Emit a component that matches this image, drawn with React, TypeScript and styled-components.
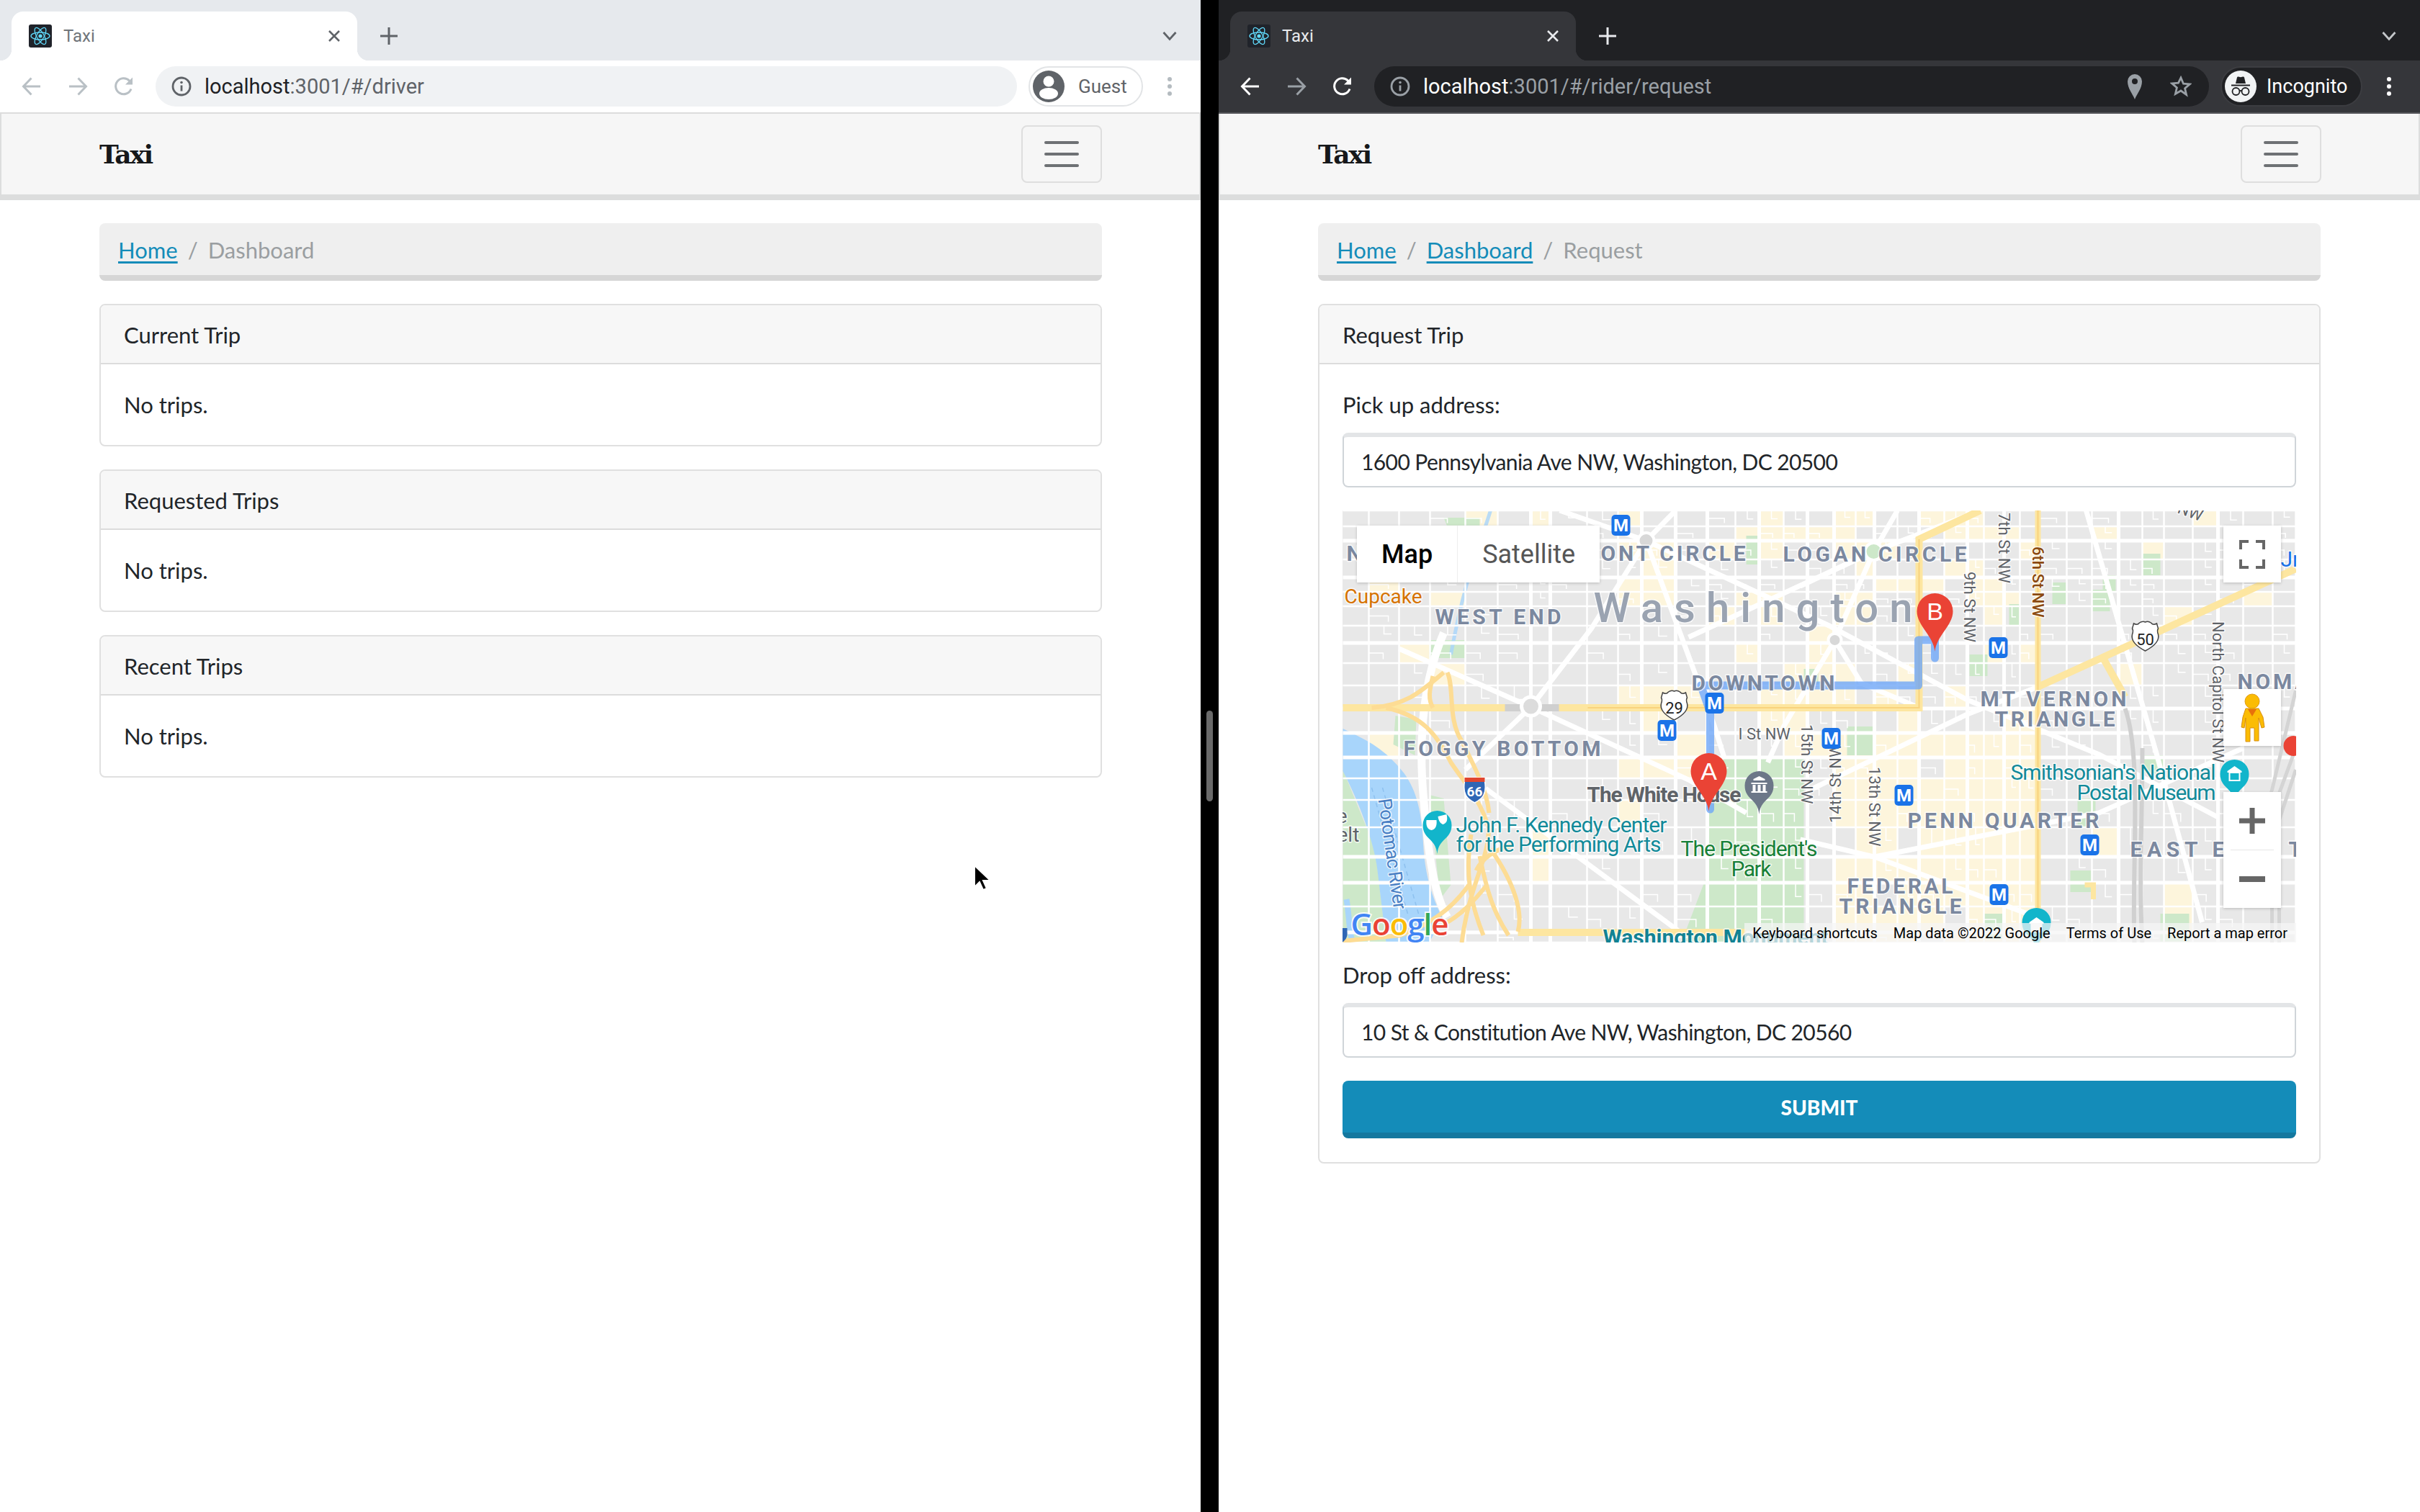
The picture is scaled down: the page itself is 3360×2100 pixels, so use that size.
import React from "react";
import styled, { createGlobalStyle } from "styled-components";

const GlobalStyle = createGlobalStyle`
  html, body { margin: 0; padding: 0; width: 3360px; height: 2100px; overflow: hidden; background: #000; }
  * { box-sizing: border-box; }
`;

const UI = `"Lato", "Noto Sans", sans-serif`;
const CHROME = `"Roboto", "Liberation Sans", sans-serif`;

const Screen = styled.div`position: relative; display: flex; width: 3360px; height: 2100px;`;
const Win = styled.div<{ $w: number }>`width: ${p => p.$w}px; height: 2100px; background: #fff; display: flex; flex-direction: column; overflow: hidden;`;
const Divider = styled.div`width: 25px; background: #000; display: flex; align-items: center; justify-content: center;`;
const Thumb = styled.div`width: 9px; height: 126px; border-radius: 5px; background: #6a6a6a;`;
const TabStrip = styled.div<{ $dark?: boolean }>`height: 84px; padding: 16px 0 0 16px; display: flex; background: ${p => p.$dark ? "#202124" : "#e6e9ed"}; flex: none;`;
const Tab = styled.div<{ $dark?: boolean }>`
  position: relative; width: 480px; height: 68px; padding: 0 22px 0 24px; display: flex; align-items: center;
  border-radius: 16px 16px 0 0; background: ${p => p.$dark ? "#35363a" : "#fff"};
  &::before, &::after { content: ""; position: absolute; bottom: 0; width: 16px; height: 16px; }
  &::before { left: -16px; background: radial-gradient(circle at 0 0, transparent 16px, ${p => p.$dark ? "#35363a" : "#fff"} 16.5px); }
  &::after { right: -16px; background: radial-gradient(circle at 100% 0, transparent 16px, ${p => p.$dark ? "#35363a" : "#fff"} 16.5px); }
`;
const TabTitle = styled.span<{ $dark?: boolean }>`margin-left: 16px; flex: 1; font: 24px ${CHROME}; color: ${p => p.$dark ? "#e8eaed" : "#70757a"};`;
const StripIcon = styled.div<{ $end?: boolean }>`width: 48px; height: 68px; display: flex; align-items: center; justify-content: center; margin-left: ${p => p.$end ? "auto" : "20px"}; margin-right: ${p => p.$end ? "19px" : "0"};`;
const Toolbar = styled.div<{ $dark?: boolean }>`height: 74px; flex: none; padding: 8px 19px 8px 12px; display: flex; align-items: center; background: ${p => p.$dark ? "#35363a" : "#fff"}; border-bottom: 2px solid ${p => p.$dark ? "#55565a" : "#dcdcdc"};`;
const NavBtn = styled.div`width: 64px; height: 56px; display: flex; align-items: center; justify-content: center;`;
const Omnibox = styled.div<{ $dark?: boolean }>`flex: 1; height: 56px; margin-left: 12px; padding: 0 24px 0 22px; border-radius: 28px; display: flex; align-items: center; background: ${p => p.$dark ? "#202124" : "#f0f2f4"};`;
const Url = styled.div<{ $dark?: boolean }>`margin-left: 18px; flex: 1; font: 29px ${CHROME}; color: ${p => p.$dark ? "#9aa0a6" : "#5f6368"}; b { font-weight: 400; color: ${p => p.$dark ? "#fff" : "#202124"}; }`;
const OmniIcon = styled.div<{ $gap: number }>`margin-right: ${p => p.$gap}px; display: flex;`;
const Pill = styled.div<{ $dark?: boolean; $w: number }>`
  width: ${p => p.$w}px; height: 56px; margin-left: 16px; padding: 0 4px; display: flex; align-items: center; border-radius: 28px;
  background: ${p => p.$dark ? "#202124" : "#fff"}; border: 2px solid ${p => p.$dark ? "#3c3d41" : "#e2e4e6"};
`;
const PillText = styled.span<{ $dark?: boolean }>`margin-left: ${p => p.$dark ? 14 : 19}px; font: ${p => p.$dark ? "27px" : "26px"} ${CHROME}; color: ${p => p.$dark ? "#fff" : "#5f6368"};`;
const Dots = styled.div<{ $dark?: boolean }>`
  width: 48px; margin-left: 13px; display: flex; flex-direction: column; align-items: center; gap: 4px;
  i { width: 6px; height: 6px; border-radius: 50%; background: ${p => p.$dark ? "#fff" : "#b4bbc0"}; }
`;
const Navbar = styled.div`height: 120px; flex: none; padding: 0 136px; display: flex; align-items: center; justify-content: space-between; background: #f6f6f6; border: solid #dcdddd; border-width: 0 2px 8px;`;
const Brand = styled.div`font: bold 36px "DejaVu Serif", serif; letter-spacing: -2.2px; color: #16181a;`;
const Toggler = styled.div`width: 112px; height: 80px; margin-right: -1px; border: 2px solid #dedede; border-radius: 8px; display: flex; flex-direction: column; align-items: center; justify-content: center; gap: 12px; i { width: 48px; height: 4px; border-radius: 2px; background: #6e7174; }`;
const Container = styled.div`width: 1392px; margin: 32px 0 0 138px; display: flex; flex-direction: column; gap: 32px; font: 31px/46px ${UI}; color: #212529;`;
const Breadcrumb = styled.div`height: 80px; padding: 14px 26px 0; display: flex; gap: 14px; background: #efefef; border-bottom: 8px solid #d6d6d6; border-radius: 8px;`;
const Crumb = styled.a`color: #148cb9; text-decoration: underline; text-underline-offset: 4px;`;
const Current = styled.span`color: #9a9ea1;`;
const Sep = styled.span`color: #9a9ea1;`;
const Card = styled.section`border: 2px solid #e0e0e0; border-radius: 8px; background: #fff; overflow: hidden;`;
const CardHead = styled.div`height: 84px; padding: 20px 32px 0; background: #f7f7f7; border-bottom: 2px solid #dcdcdc; margin-top: -2px;`;
const CardBody = styled.div`padding: 33px 32px 33px; display: flex; flex-direction: column;`;
const Line = styled.div`height: 46px; line-height: 46px;`;
const Field = styled.div`height: 76px; margin-top: 16px; padding: 0 24px; display: flex; align-items: center; border: 2px solid #d0d5d9; border-top-width: 6px; border-top-color: #e3e5e7; border-radius: 8px; background: #fff; font: 30px ${UI}; letter-spacing: -0.6px; color: #212529;`;
const MapBox = styled.div`position: relative; height: 600px; margin: 32px 0 22px; overflow: hidden; background: #e8e8e8;`;
const MapSvg = styled.svg`display: block; width: 100%; height: 100%;`;
const MapType = styled.div`position: absolute; left: 20px; top: 21px; height: 79px; display: flex; background: #fff; box-shadow: 0 1px 4px rgba(0,0,0,.2);`;
const MapTypeBtn = styled.div<{ $on?: boolean }>`padding: 0 34px; display: flex; align-items: center; font: ${p => p.$on ? 500 : 400} 36px ${CHROME}; color: ${p => p.$on ? "#000" : "#565656"}; & + & { border-left: 1px solid #eee; }`;
const MapButton = styled.div<{ $top: number }>`position: absolute; right: 21px; top: ${p => p.$top}px; width: 80px; height: 79px; display: flex; align-items: center; justify-content: center; background: #fff; box-shadow: 0 1px 4px rgba(0,0,0,.2);`;
const ZoomBox = styled.div`position: absolute; right: 21px; top: 391px; width: 80px; height: 161px; display: flex; flex-direction: column; align-items: center; background: #fff; box-shadow: 0 1px 4px rgba(0,0,0,.2);`;
const ZoomBtn = styled.div`flex: 1; display: flex; align-items: center; justify-content: center; width: 100%;`;
const ZoomLine = styled.div`width: 60px; height: 1px; flex: none; background: #e6e6e6;`;
const Attribution = styled.div`position: absolute; right: 0; bottom: 0; height: 27px; display: flex; align-items: center; font: 20px ${CHROME}; color: #000; background: rgba(245,245,245,.72); padding-right: 7px; span { padding: 0 11px; white-space: nowrap; } span:last-child { padding-right: 5px; }`;
const Submit = styled.div`height: 80px; margin-top: 32px; padding-top: 2px; display: flex; align-items: center; justify-content: center; border-radius: 8px; background: #148cb9; border-bottom: 8px solid #14789f; font: 900 28px ${UI}; color: #fff;`;
const Pointer = styled.svg`position: absolute; left: 1350px; top: 1200px;`;

const Lbl = styled.text<{ $k: string }>`
  dominant-baseline: central; paint-order: stroke; stroke: rgba(255,255,255,.75); stroke-width: 3px; stroke-linejoin: round;
  font-family: ${CHROME};
  ${p => ({
    area: "font-size:30px;font-weight:700;fill:#7b889f;",
    city: "font-size:58px;font-weight:500;fill:#9aa3b1;",
    poi: "font-size:30px;fill:#128a99;",
    bold: "font-size:30px;font-weight:700;fill:#5f6368;",
    park: "font-size:30px;fill:#188038;",
    road: "font-size:22px;fill:#5f6368;",
    road6: "font-size:22px;font-weight:500;fill:#8b4a10;",
    river: "font-size:26px;fill:#4a80c4;",
    orange: "font-size:28px;fill:#d67300;",
    mono: "font-size:28px;fill:#5f6368;",
    mc: "font-size:30px;font-weight:700;fill:#128293;",
    blue: "font-size:30px;fill:#1a73e8;",
  } as Record<string, string>)[p.$k]}
`;
const LogoText = styled.text`font: 600 42px "Open Sans", ${CHROME}; paint-order: stroke; stroke: rgba(255,255,255,.85); stroke-width: 4px; letter-spacing: -1px;`;
const ShieldNum = styled.text`font: 22px ${CHROME}; fill: #222; text-anchor: middle; dominant-baseline: central;`;
const PinLetter = styled.text`font: 34px "Liberation Sans", sans-serif; fill: #fff; text-anchor: middle; dominant-baseline: central;`;
const MetroLetter = styled.text`font: bold 24px ${CHROME}; fill: #fff; text-anchor: middle; dominant-baseline: central;`;

/* ---------- chrome icons ---------- */
const Favicon = () => (
  <svg width="32" height="32" viewBox="0 0 32 32">
    <rect width="32" height="32" rx="3" fill="#20232a" />
    <g fill="none" stroke="#61dafb" strokeWidth="1.3">
      <ellipse cx="16" cy="16" rx="13" ry="5" />
      <ellipse cx="16" cy="16" rx="13" ry="5" transform="rotate(60 16 16)" />
      <ellipse cx="16" cy="16" rx="13" ry="5" transform="rotate(120 16 16)" />
    </g>
    <circle cx="16" cy="16" r="2.6" fill="#61dafb" />
  </svg>
);
const Close = ({ c }: { c: string }) => (
  <svg width="20" height="20" viewBox="0 0 20 20"><path d="M3 3l14 14M17 3L3 17" stroke={c} strokeWidth="2.6" /></svg>
);
const Plus = ({ c }: { c: string }) => (
  <svg width="26" height="26" viewBox="0 0 26 26"><path d="M13 1v24M1 13h24" stroke={c} strokeWidth="3" /></svg>
);
const Chevron = ({ c }: { c: string }) => (
  <svg width="20" height="14" viewBox="0 0 20 14"><path d="M1.5 2L10 11.5 18.5 2" fill="none" stroke={c} strokeWidth="2.8" /></svg>
);
const Back = ({ c }: { c: string }) => (
  <svg width="28" height="28" viewBox="0 0 28 28"><path d="M26 14H3M13.5 2.5L2.5 14l11 11.5" fill="none" stroke={c} strokeWidth="3" /></svg>
);
const Forward = ({ c }: { c: string }) => (
  <svg width="28" height="28" viewBox="0 0 28 28"><path d="M2 14h23M14.5 2.5l11 11.5-11 11.5" fill="none" stroke={c} strokeWidth="3" /></svg>
);
const Reload = ({ c }: { c: string }) => (
  <svg width="28" height="28" viewBox="0 0 28 28"><path d="M24 17.5A11 11 0 1 1 21.5 6L25 10" fill="none" stroke={c} strokeWidth="3" /><path d="M26 1.5v10H16z" fill={c} /></svg>
);
const Info = ({ c }: { c: string }) => (
  <svg width="28" height="28" viewBox="0 0 28 28"><circle cx="14" cy="14" r="12" fill="none" stroke={c} strokeWidth="2.8" /><path d="M14 12.5v8" stroke={c} strokeWidth="2.8" /><circle cx="14" cy="8.5" r="1.8" fill={c} /></svg>
);
const GuestAvatar = () => (
  <svg width="44" height="44" viewBox="0 0 44 44"><circle cx="22" cy="22" r="22" fill="#5f6368" /><circle cx="22" cy="15" r="7.5" fill="#fff" /><ellipse cx="22" cy="32" rx="13" ry="8" fill="#fff" /></svg>
);
const IncognitoAvatar = () => (
  <svg width="44" height="44" viewBox="0 0 44 44">
    <circle cx="22" cy="22" r="22" fill="#f1f3f4" />
    <path d="M15 18l2-8.5c.3-1 1-1.3 2-1l3 .8 3-.8c1-.3 1.7 0 2 1l2 8.5z" fill="#202124" />
    <path d="M9 20.5h26" stroke="#202124" strokeWidth="2" />
    <circle cx="15.5" cy="29" r="5" fill="none" stroke="#202124" strokeWidth="1.8" />
    <circle cx="28.5" cy="29" r="5" fill="none" stroke="#202124" strokeWidth="1.8" />
    <path d="M20 28.5c1.5-1 2.5-1 4 0" fill="none" stroke="#202124" strokeWidth="1.8" />
  </svg>
);
const LocationPin = () => (
  <svg width="22" height="36" viewBox="0 0 22 36"><path d="M11 36C8 28 1 21 1 11a10 10 0 0 1 20 0c0 10-7 17-10 25z" fill="#9aa0a6" /><circle cx="11" cy="11" r="4" fill="#202124" /></svg>
);
const Star = () => (
  <svg width="30" height="30" viewBox="0 0 30 30"><path d="M15 3l3.5 8.2 8.8.7-6.7 5.8 2 8.7L15 21l-7.600 4.400 2-8.700-6.700-5.800 8.800-.7z" fill="none" stroke="#9aa0a6" strokeWidth="2.8" /></svg>
);

/* ---------- map ---------- */
const V = [36, 78, 121, 170, 215, 261, 288, 339, 382, 415, 462, 506, 545, 578, 612, 645, 682, 712, 738, 770, 800, 835, 867, 890, 918, 940, 965, 1005, 1040, 1077, 1110, 1140, 1180, 1215, 1250, 1291, 1323];
const H = [0, 22, 42, 68, 93, 113, 133, 160, 184, 212, 243, 275, 309, 343, 372, 402, 440, 481, 517, 550, 586, 600];
const MAJOR_V = [261, 288, 415, 462, 506, 578, 645, 682, 738, 800, 867, 918, 1077, 1215];
const MAJOR_H = [42, 93, 184, 275, 309, 343, 481, 517, 586];

const rand = (a: number, b: number) => {
  const s = Math.sin(a * 12.9898 + b * 78.233) * 43758.5453;
  return s - Math.floor(s);
};
const cells: { x: number; y: number; w: number; h: number }[] = [];
const alleys: string[] = [];
V.forEach((x, i) => {
  if (i === V.length - 1) return;
  H.forEach((y, j) => {
    if (j === H.length - 1) return;
    const r = rand(x, y);
    const w = V[i + 1] - x;
    const h = H[j + 1] - y;
    let p = 0.04;
    if (x >= 340 && x < 660 && y < 345) p = 0.42;
    if (x >= 645 && x < 965 && y >= 309) p = 0.85;
    if (x >= 645 && x < 965 && y < 309) p = 0.3;
    if (x >= 500 && x < 650 && y > 340) p = 0;
    if (x < 340 && y < 240 && y > 30) p = 0.1;
    if (r < p) cells.push({ x, y, w, h });
    const q = rand(y + 3, x + 7);
    if (q < 0.45 && (x > 140 || y < 300)) {
      alleys.push(q < 0.22
        ? `M${x + w * 0.5} ${y}v${h * (0.4 + q)}h${w * 0.25}`
        : `M${x} ${y + h * 0.5}h${w * (0.2 + q)}v${h * 0.3}`);
    }
  });
});

const shield = (x: number, y: number) =>
  `M${x - 16} ${y - 20}q5 3 8 -1q4 -3 8 -1q4 -2 8 1q3 4 8 1l2 7q-2 3 0 8q3 12 -18 23q-21 -11 -18 -23q2 -5 0 -8z`;
const pin = (cx: number, cy: number, r: number, tip: number) =>
  `M${cx} ${tip}C${cx - 2} ${tip - 22} ${cx - r} ${cy + 20} ${cx - r} ${cy}A${r} ${r} 0 1 1 ${cx + r} ${cy}C${cx + r} ${cy + 20} ${cx + 2} ${tip - 22} ${cx} ${tip}Z`;

const metros = [[386, 20], [516, 267], [450, 305], [678, 316], [910, 190], [779, 395], [1037, 464], [911, 533]];
const whiteDiags = [
  "M421 42L516 300L530 345", "M78 192L261 273L480 374L560 420", "M261 273L345 164L421 42L462 0", "M301 0L421 42",
  "M421 42L675 160L867 263L1050 339L1215 426", "M635 105L737 57L885 0", "M683 180L737 57L770 0",
  "M653 386L867 283L965 245", "M480 176L737 57", "M198 386L466 584", "M635 457L738 481L961 564",
  "M1032 0L1130 339L1193 572", "M683 180L612 300L590 350", "M683 180L720 240L800 274",
  "M261 273L170 360", "M738 481L1050 420L1250 330",
];

const MapDrawing = () => (
  <MapSvg viewBox="0 0 1323 600">
    <rect width="1323" height="600" fill="#e8e8e8" />
    {cells.map((c, i) => <rect key={i} x={c.x} y={c.y} width={c.w} height={c.h} fill="#fdf5dc" />)}
    {/* parks */}
    <path d="M508 345H640V600H470L508 500Z" fill="#cde8c9" />
    <path d="M0 360L45 470L60 600H0Z M73 285L102 290L100 340L70 325Z M120 395L140 400L150 520L135 540Z" fill="#cde8c9" />
    <path d="M140 10h50v25h-40z M870 200h25v30h-25z M985 100h20v30h-20z M1040 110h25v30h-25z M1110 60h25v30h-25z M1110 340h30v25h-30z M925 130h15v30h-15z M1055 90h18v24h-18z M560 35h20v40h-20z M700 300h40v40h-40z M1020 400h25v40h-25z M890 560h30v35h-30z M1135 560h40v40h-40z M1260 460h40v70h-40z M1010 500h30v30h-30z M640 220h20v25h-20z M120 180h50v25h-50z" fill="#cde8c9" />
    <path d="M0 303C30 318 55 327 85 365C103 390 110 420 112 470C115 510 125 540 138 565L120 600H60L48 500C44 460 20 400 0 362Z" fill="#a8d5fb" />
    <path d="M40 385L90 560M55 385L105 560" stroke="#8ec1ef" strokeWidth="1.5" strokeDasharray="6 5" fill="none" />
    <path d="M5 540C10 570 8 590 15 600" stroke="#a8d5fb" strokeWidth="8" fill="none" />
    <path d="M205 0C190 50 170 90 150 200" stroke="#a8d5fb" strokeWidth="5" fill="none" opacity=".8" />
    {/* streets */}
    {alleys.map(d => <path key={d} d={d} stroke="#fff" strokeWidth="1.5" fill="none" />)}
    {V.map(x => <path key={`v${x}`} d={`M${x} 0V600`} stroke="#fff" strokeWidth={MAJOR_V.includes(x) ? 5 : 2.5} />)}
    {H.map(y => <path key={`h${y}`} d={`M0 ${y}H1323`} stroke="#fff" strokeWidth={MAJOR_H.includes(y) ? 5 : 2.5} />)}
    {whiteDiags.map(d => <path key={d} d={d} stroke="#fff" strokeWidth="7" fill="none" />)}
    <path d="M140 170C110 240 105 320 112 400C118 470 125 530 145 565" stroke="#fff" strokeWidth="11" fill="none" />
    {/* rail */}
    <path d="M1086 275C1110 340 1095 500 1099 600M1110 330C1110 420 1105 520 1110 600" stroke="#d0d0d0" strokeWidth="6" fill="none" />
    <path d="M1290 600V420L1323 330M1300 600V430L1323 360M1280 430L1323 250" stroke="#d4d4d4" strokeWidth="5" fill="none" />
    {/* highways */}
    <g fill="none" stroke="#fde6a0" strokeLinecap="butt">
      <path d="M0 274H800V40L885 0" strokeWidth="10" />
      <path d="M965 0V600" strokeWidth="8" />
      <path d="M965 245L1055 204L1323 81" strokeWidth="10" />
      <path d="M1055 204L1086 259" strokeWidth="10" />
      <path d="M243 586H560" strokeWidth="10" />
      <path d="M1030 520h12v20" strokeWidth="7" />
    </g>
    <path d="M800 40V274H340M965 0V600" fill="none" stroke="#f6c667" strokeWidth="2" opacity=".6" />
    <g fill="none" stroke="#fddc94" strokeWidth="6">
      <path d="M40 274C90 270 110 250 140 225" />
      <path d="M60 274C110 285 130 310 150 350C170 380 190 400 202 440C205 480 175 520 165 600" />
      <path d="M145 225C155 245 145 290 165 320C185 360 200 390 203 420" />
      <path d="M125 230C120 250 118 262 125 274" />
      <path d="M205 470C240 520 250 560 243 585M190 480C200 530 210 560 230 590M178 450C170 500 175 540 195 590" />
      <path d="M175 520C150 555 120 575 80 590L0 598" />
      <path d="M185 500C195 480 215 470 235 465" />
      <path d="M200 520C180 545 165 560 145 572" />
    </g>
    <path d="M225 274H300" stroke="#cfcfcf" strokeWidth="10" />
    <circle cx="261" cy="272" r="13" fill="#dcdcdc" stroke="#fff" strokeWidth="5" />
    <circle cx="683" cy="180" r="9" fill="#d8d8d8" stroke="#fff" strokeWidth="4" />
    <circle cx="737" cy="57" r="12" fill="#cde8c9" stroke="#fff" strokeWidth="4" />
    <circle cx="421" cy="42" r="11" fill="#d8d8d8" stroke="#fff" strokeWidth="4" />
    {/* route */}
    <path d="M510 415V280L497 243H799V180H822V205" fill="none" stroke="#6ea6f7" strokeOpacity=".8" strokeWidth="11" strokeLinejoin="round" strokeLinecap="round" />

    {/* labels */}
    <Lbl $k="area" x="5" y="59" textLength="15">N</Lbl>
    <Lbl $k="orange" x="2" y="119">Cupcake</Lbl>
    <Lbl $k="area" x="128" y="147" textLength="175">WEST END</Lbl>
    <Lbl $k="area" x="358" y="59" textLength="201">ONT CIRCLE</Lbl>
    <Lbl $k="area" x="611" y="60" textLength="255">LOGAN CIRCLE</Lbl>
    <Lbl $k="city" x="348" y="135" textLength="443">Washington</Lbl>
    <Lbl $k="area" x="484" y="239" textLength="199">DOWNTOWN</Lbl>
    <Lbl $k="area" x="84" y="330" textLength="274">FOGGY BOTTOM</Lbl>
    <Lbl $k="road" x="549" y="310">I St NW</Lbl>
    <Lbl $k="bold" x="339" y="394" textLength="214">The White House</Lbl>
    <Lbl $k="poi" x="157" y="436" textLength="293">John F. Kennedy Center</Lbl>
    <Lbl $k="poi" x="157" y="463" textLength="285">for the Performing Arts</Lbl>
    <Lbl $k="park" x="469" y="469" textLength="190">The President's</Lbl>
    <Lbl $k="park" x="539" y="497" textLength="56">Park</Lbl>
    <Lbl $k="mono" x="-18" y="424">re</Lbl>
    <Lbl $k="mono" x="-8" y="450">elt</Lbl>
    <Lbl $k="river" transform="translate(58 400) rotate(82)" textLength="155">Potomac River</Lbl>
    <Lbl $k="mc" x="361" y="592">Washington Monument</Lbl>
    <Lbl $k="road" transform="translate(918 3) rotate(90)">7th St NW</Lbl>
    <Lbl $k="road6" transform="translate(965 50) rotate(90)">6th St NW</Lbl>
    <Lbl $k="road" transform="translate(870 85) rotate(90)">9th St NW</Lbl>
    <Lbl $k="road" transform="translate(1215 154) rotate(90)">North Capitol St NW</Lbl>
    <Lbl $k="road" transform="translate(644 297) rotate(90)">15th St NW</Lbl>
    <Lbl $k="road" transform="translate(684 434) rotate(-90)">14th St NW</Lbl>
    <Lbl $k="road" transform="translate(738 356) rotate(90)">13th St NW</Lbl>
    <Lbl $k="road" transform="translate(1160 -4) rotate(20)">NW</Lbl>
    <Lbl $k="area" x="885" y="261" textLength="203">MT VERNON</Lbl>
    <Lbl $k="area" x="905" y="289" textLength="167">TRIANGLE</Lbl>
    <Lbl $k="poi" x="927" y="363" textLength="285">Smithsonian's National</Lbl>
    <Lbl $k="poi" x="1019" y="391" textLength="193">Postal Museum</Lbl>
    <Lbl $k="area" x="784" y="430" textLength="266">PENN QUARTER</Lbl>
    <Lbl $k="area" x="1093" y="470" textLength="185">EAST END</Lbl>
    <Lbl $k="area" x="700" y="521" textLength="147">FEDERAL</Lbl>
    <Lbl $k="area" x="689" y="549" textLength="170">TRIANGLE</Lbl>
    <Lbl $k="area" x="1242" y="237" textLength="100">NOMA</Lbl>
    <Lbl $k="area" x="1313" y="470">T</Lbl>
    <Lbl $k="blue" x="1302" y="67">Jr</Lbl>

    {/* shields */}
    <path d={shield(460, 273)} fill="#fff" stroke="#444" strokeWidth="1.5" />
    <ShieldNum x="460" y="274">29</ShieldNum>
    <path d={shield(1114, 177)} fill="#fff" stroke="#444" strokeWidth="1.5" />
    <ShieldNum x="1114" y="179">50</ShieldNum>
    <path d="M169 371h28v5c3 18-3 24-14 30c-11-6-17-12-14-30z" fill="#2f66b5" stroke="#fff" strokeWidth="1.5" />
    <path d="M169 371h28v6h-28z" fill="#e0452f" />
    <ShieldNum x="183" y="390" style={{ fill: "#fff", fontWeight: 700, fontSize: 19 }}>66</ShieldNum>
    <path d="M-8 580h14v5c1 8-3 12-7 15h-7z" fill="#2f66b5" />

    {/* metro */}
    {metros.map(([x, y]) => (
      <g key={`${x}-${y}`}>
        <rect x={x - 13} y={y - 14} width="26" height="29" rx="5" fill="#1a73e8" />
        <MetroLetter x={x} y={y + 1}>M</MetroLetter>
      </g>
    ))}
    {/* poi pins */}
    <path d={pin(578, 382, 20, 422)} fill="#6c7788" />
    <path d="M567 378h22v2h-22zM569 381h4v9h-4zM576 381h4v9h-4zM583 381h4v9h-4zM567 390h22v2h-22zM570 373l8-4 8 4v2h-16z" fill="#fff" />
    <path d={pin(131, 437, 20, 477)} fill="#12b5cb" />
    <path d="M116 430h14c1 9-2 13-7 14c-5-1-8-5-7-14zM132 425l12-3c2 9 0 12-5 14c-3-1-6-4-7-11z" fill="#fff" />
    <path d={pin(1238, 366, 20, 406)} fill="#12b5cb" />
    <path d="M1228 362l10-7 10 7v2h-2v12h-16v-12h-2z" fill="#fff" />
    <path d="M1232 365h12v9h-12z" fill="#12b5cb" />
    <path d={pin(963, 572, 20, 612)} fill="#12b5cb" />
    <path d="M953 572l10-7 10 7v2h-2v12h-16v-12h-2z" fill="#fff" />
    <circle cx="1320" cy="327" r="14" fill="#ea4335" />
    {/* route pins */}
    <path d={pin(508, 362, 25, 418)} fill="#ea4335" />
    <PinLetter x="508" y="362">A</PinLetter>
    <path d={pin(822, 140, 25, 196)} fill="#ea4335" />
    <PinLetter x="822" y="140">B</PinLetter>
    {/* logo */}
    <LogoText x="11" y="590">
      <tspan fill="#4285f4">G</tspan><tspan fill="#ea4335">o</tspan><tspan fill="#fbbc05">o</tspan><tspan fill="#4285f4">g</tspan><tspan fill="#34a853">l</tspan><tspan fill="#ea4335">e</tspan>
    </LogoText>
  </MapSvg>
);

const Pegman = () => (
  <svg width="36" height="68" viewBox="0 0 36 68">
    <circle cx="18" cy="11" r="10" fill="#fbbc04" stroke="#e09b12" />
    <path d="M9 21h18l6 12 2 14-4 1-4-14v32h-6V48h-6v19h-6V34L7 48l-4-1 2-14z" fill="#fbbc04" stroke="#d88f10" />
    <path d="M12 22h12l-6 10z" fill="#e8710a" />
  </svg>
);

const GoogleMap = () => (
  <MapBox>
    <MapDrawing />
    <MapType>
      <MapTypeBtn $on>Map</MapTypeBtn>
      <MapTypeBtn>Satellite</MapTypeBtn>
    </MapType>
    <MapButton $top={21}>
      <svg width="36" height="40" viewBox="0 0 36 40"><path d="M2 13V2h11M23 2h11v11M34 27v11H23M13 38H2V27" fill="none" stroke="#666" strokeWidth="4" /></svg>
    </MapButton>
    <MapButton $top={248}><Pegman /></MapButton>
    <ZoomBox>
      <ZoomBtn><svg width="36" height="36" viewBox="0 0 36 36"><path d="M18 0v36M0 18h36" stroke="#666" strokeWidth="7" /></svg></ZoomBtn>
      <ZoomLine />
      <ZoomBtn><svg width="36" height="8" viewBox="0 0 36 8"><path d="M0 4h36" stroke="#666" strokeWidth="8" /></svg></ZoomBtn>
    </ZoomBox>
    <Attribution>
      <span>Keyboard shortcuts</span>
      <span>Map data ©2022 Google</span>
      <span>Terms of Use</span>
      <span>Report a map error</span>
    </Attribution>
  </MapBox>
);

/* ---------- window ---------- */
type BrowserProps = { dark?: boolean; width: number; host: string; rest: string; children: React.ReactNode };
const Browser = ({ dark, width, host, rest, children }: BrowserProps) => {
  const navC = dark ? "#fff" : "#b9c0c5";
  return (
    <Win $w={width}>
      <TabStrip $dark={dark}>
        <Tab $dark={dark}>
          <Favicon />
          <TabTitle $dark={dark}>Taxi</TabTitle>
          <Close c={dark ? "#e8eaed" : "#5f6368"} />
        </Tab>
        <StripIcon><Plus c={dark ? "#e8eaed" : "#5f6368"} /></StripIcon>
        <StripIcon $end><Chevron c={dark ? "#c4c7ca" : "#5f6368"} /></StripIcon>
      </TabStrip>
      <Toolbar $dark={dark}>
        <NavBtn><Back c={navC} /></NavBtn>
        <NavBtn><Forward c={dark ? "#9aa0a6" : navC} /></NavBtn>
        <NavBtn><Reload c={navC} /></NavBtn>
        <Omnibox $dark={dark}>
          <Info c={dark ? "#9aa0a6" : "#5f6368"} />
          <Url $dark={dark}><b>{host}</b>{rest}</Url>
          {dark && <OmniIcon $gap={38}><LocationPin /></OmniIcon>}
          {dark && <OmniIcon $gap={0}><Star /></OmniIcon>}
        </Omnibox>
        <Pill $dark={dark} $w={dark ? 197 : 159}>
          {dark ? <IncognitoAvatar /> : <GuestAvatar />}
          <PillText $dark={dark}>{dark ? "Incognito" : "Guest"}</PillText>
        </Pill>
        <Dots $dark={dark}><i /><i /><i /></Dots>
      </Toolbar>
      <Navbar>
        <Brand>Taxi</Brand>
        <Toggler><i /><i /><i /></Toggler>
      </Navbar>
      <Container>{children}</Container>
    </Win>
  );
};

const TripCard = ({ title }: { title: string }) => (
  <Card>
    <CardHead>{title}</CardHead>
    <CardBody><Line>No trips.</Line></CardBody>
  </Card>
);

export default function App() {
  return (
    <Screen>
      <GlobalStyle />
      <Browser width={1667} host="localhost" rest=":3001/#/driver">
        <Breadcrumb>
          <Crumb>Home</Crumb><Sep>/</Sep><Current>Dashboard</Current>
        </Breadcrumb>
        <TripCard title="Current Trip" />
        <TripCard title="Requested Trips" />
        <TripCard title="Recent Trips" />
      </Browser>
      <Divider><Thumb /></Divider>
      <Browser dark width={1668} host="localhost" rest=":3001/#/rider/request">
        <Breadcrumb>
          <Crumb>Home</Crumb><Sep>/</Sep><Crumb>Dashboard</Crumb><Sep>/</Sep><Current>Request</Current>
        </Breadcrumb>
        <Card>
          <CardHead>Request Trip</CardHead>
          <CardBody>
            <Line>Pick up address:</Line>
            <Field>1600 Pennsylvania Ave NW, Washington, DC 20500</Field>
            <GoogleMap />
            <Line>Drop off address:</Line>
            <Field>10 St &amp; Constitution Ave NW, Washington, DC 20560</Field>
            <Submit>SUBMIT</Submit>
          </CardBody>
        </Card>
      </Browser>
      <Pointer width="26" height="40" viewBox="0 0 26 40">
        <path d="M3 2v30l7-7 5 11 5-2-5-11h10z" fill="#000" stroke="#fff" strokeWidth="2" />
      </Pointer>
    </Screen>
  );
}
